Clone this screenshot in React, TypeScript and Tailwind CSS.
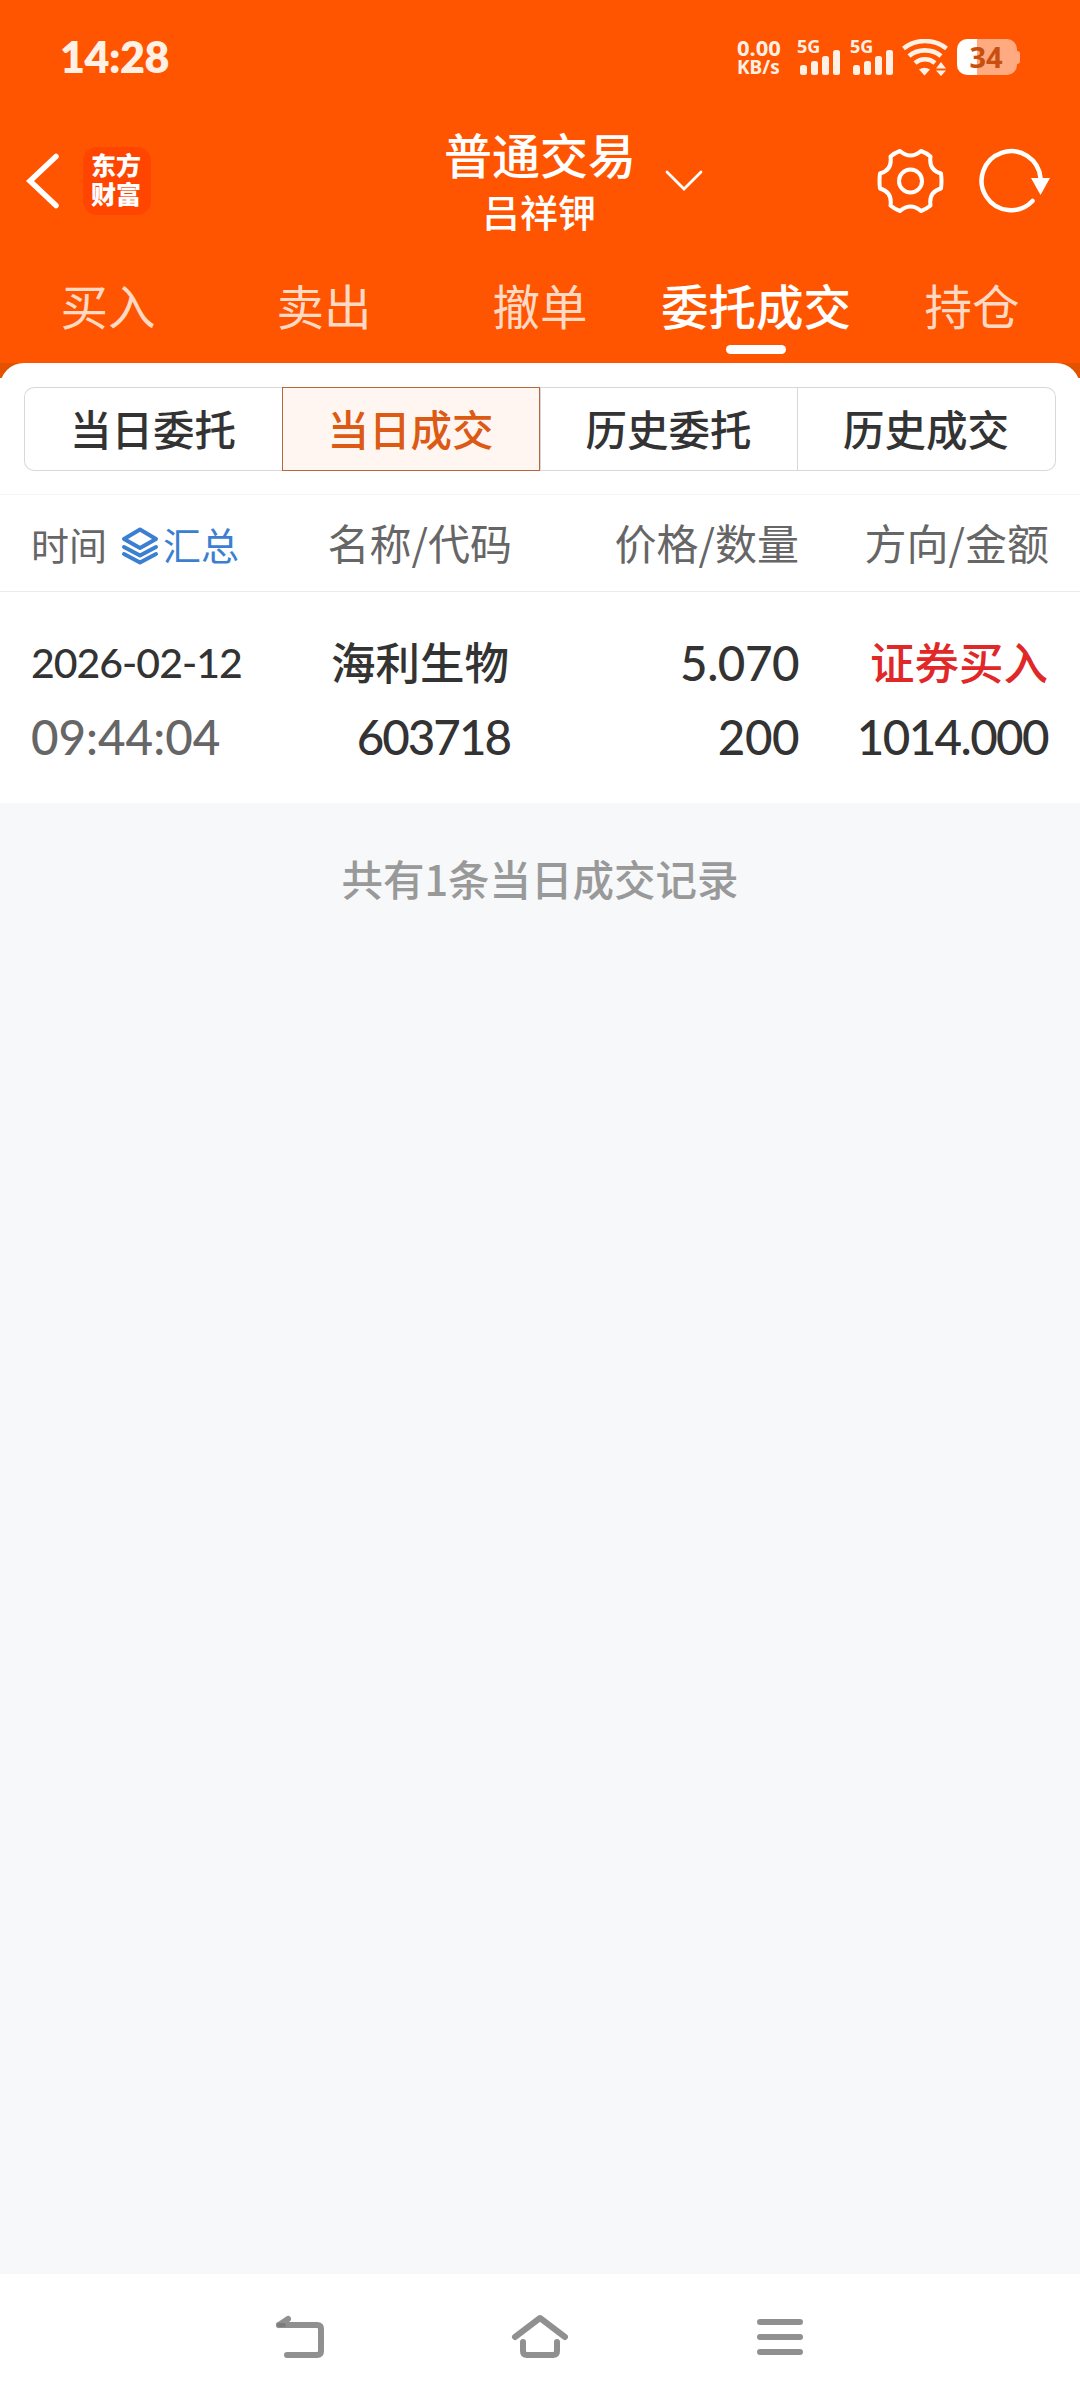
import React from 'react'

interface Tab {
    label: string
    active?: boolean
}

interface Deal {
    date: string
    time: string
    name: string
    code: string
    price: string
    amount: string
    direction: string
    total: string
}

const tabs: Tab[] = [{ label: '买入' }, { label: '卖出' }, { label: '撤单' }, { label: '委托成交', active: true }, { label: '持仓' }]

const segments: Tab[] = [{ label: '当日委托' }, { label: '当日成交', active: true }, { label: '历史委托' }, { label: '历史成交' }]

const deals: Deal[] = [{ date: '2026-02-12', time: '09:44:04', name: '海利生物', code: '603718', price: '5.070', amount: '200', direction: '证券买入', total: '1014.000' }]

const SignalBars = () => (
    <div className="flex w-[44px] flex-col">
        <span className="h-[11px] font-['Noto_Sans'] text-[18px] leading-[14px] font-bold">5G</span>
        <svg className="ml-[3px]" width="40" height="25" viewBox="0 0 40 25" fill="currentColor">
            <rect x="0" y="15" width="7" height="10" rx="2.5" />
            <rect x="11" y="11" width="7" height="14" rx="2.5" />
            <rect x="22" y="6" width="7" height="19" rx="2.5" />
            <rect x="33" y="0" width="7" height="25" rx="2.5" />
        </svg>
    </div>
)

const WifiIcon = () => (
    <svg width="46" height="37" viewBox="0 0 46 37" fill="none" stroke="currentColor" strokeWidth="4.6">
        <path d="M1.5 9.5C14 -.5 32 -.5 44.5 9.5" />
        <path d="M7 17C16 9.5 30 9.5 39 17" />
        <path d="M13 24C19 19 27 19 33 24" />
        <path d="M17 30.5Q22.5 27 28 30.5L22.5 36.5Z" fill="currentColor" stroke="none" />
        <path d="M34 29.5L39 23L44 29.5ZM34 31.5L39 37L44 31.5Z" fill="currentColor" stroke="none" />
    </svg>
)

const Battery = () => (
    <div className="flex items-center">
        <div className="flex h-9 w-[60px] items-center justify-center rounded-[10px] bg-linear-to-r from-white from-[34%] to-[#ffaa80] to-[34%] pr-[2px] font-['Noto_Sans'] text-[29px] font-bold text-[#c8500f]">34</div>
        <div className="h-[13px] w-[3px] rounded-r-sm bg-[#ffaa80]" />
    </div>
)

const StatusBar = () => (
    <div className="flex h-[114px] items-start justify-between pr-[60px] pl-[60px] text-[#fff0e6]">
        <div className="mt-[29px] font-['Lato'] text-[43px] leading-[56px] font-extrabold tracking-[-0.400px]">14:28</div>
        <div className="mt-[39px] flex items-start">
            <div className="-mt-[2px] w-[60px] font-['Noto_Sans'] font-bold">
                <div className="text-[22px] leading-[20px]">0.00</div>
                <div className="text-[19px] leading-[21px]">KB/s</div>
            </div>
            <div className="mr-[9px]">
                <SignalBars />
            </div>
            <SignalBars />
            <div className="mr-[9px] ml-[8px]">
                <WifiIcon />
            </div>
            <Battery />
        </div>
    </div>
)

const GearIcon = () => (
    <svg width="68" height="66" viewBox="-33.5 -33 68 66" fill="none" stroke="currentColor" strokeWidth="4" strokeLinejoin="round">
        <path d="M-10.500 -30Q0 -21 10.500 -30Q16 -28 20 -24.500Q18 -11 30.500 -7.500Q31.500 0 30.500 7.500Q18 11 20 24.500Q16 28 10.500 30Q0 21 -10.500 30Q-16 28 -20 24.500Q-18 11 -30.500 7.500Q-31.500 0 -30.500 -7.500Q-18 -11 -20 -24.500Q-16 -28 -10.500 -30Z" />
        <circle r="11.500" />
    </svg>
)

const RefreshIcon = () => (
    <svg width="72" height="66" viewBox="-33 -33 72 66" fill="none" stroke="currentColor" strokeWidth="4.500" strokeLinecap="round">
        <path d="M21.500 20A29.500 29.500 0 1 1 29.500 -3" />
        <path d="M20 -3H39L29.500 14Z" fill="currentColor" stroke="none" />
    </svg>
)

const TitleBar = () => (
    <div className="grid h-[135px] grid-cols-[1fr_auto_1fr] items-center text-white">
        <div className="-mt-[2px] flex items-center">
            <svg className="ml-[25px]" width="36" height="56" viewBox="0 0 36 56" fill="none" stroke="currentColor" strokeWidth="5.500" strokeLinecap="round">
                <path d="M31 3.500L5 28L31 52.500" />
            </svg>
            <div className="ml-[22px] flex h-[68px] w-[68px] flex-col items-center rounded-[14px] bg-[#ff4500] pr-[2px] text-[25px] leading-[29px] font-black">
                <span className="mt-[3px]">东方</span>
                <span>财富</span>
            </div>
        </div>
        <div className="-mt-[2px] text-center font-medium">
            <div className="text-[48px] leading-[60px]">普通交易</div>
            <div className="pr-[2px] text-[38px] leading-[56px]">吕祥钾</div>
        </div>
        <div className="-mt-[2px] flex items-center">
            <svg className="ml-[28px]" width="40" height="22" viewBox="0 0 40 22" fill="none" stroke="currentColor" strokeWidth="2.800" strokeLinecap="round">
                <path d="M3 2L20 19L37 2" />
            </svg>
            <div className="mr-[30px] ml-auto flex gap-[33px]">
                <GearIcon />
                <RefreshIcon />
            </div>
        </div>
    </div>
)

const TabBar = () => (
    <div className="grid h-[114px] grid-cols-5">
        {tabs.map((tab) => (
            <div key={tab.label} className={`flex flex-col items-center pt-[21px] ${tab.active ? 'font-medium text-white' : 'text-[#ffd9c4]'}`}>
                <span className="text-[47.500px] leading-[70px] whitespace-nowrap">{tab.label}</span>
                {tab.active && <span className="mt-[5px] h-[9px] w-[60px] rounded-full bg-white" />}
            </div>
        ))}
    </div>
)

const SegmentedControl = () => (
    <div className="mx-[24px] grid h-[84px] grid-cols-4">
        {segments.map((segment) => (
            <div
                key={segment.label}
                className={`flex items-center justify-center border pr-[1px] pb-[2px] text-[41.500px] font-medium first:rounded-l-[10px] first:border-r-0 last:rounded-r-[10px] last:border-l-0 ${
                    segment.active ? 'border-[#b5683c] bg-[#fff6f2] text-[#dc5a14]' : 'border-[#d8d8d8] text-[#333]'
                }`}
            >
                {segment.label}
            </div>
        ))}
    </div>
)

const LayersIcon = () => (
    <svg className="mt-[4px]" width="38" height="38" viewBox="0 0 38 38" fill="none" stroke="currentColor" strokeWidth="4" strokeLinecap="round" strokeLinejoin="round">
        <path d="M19 2.500L35 12L19 21L3 12Z" />
        <path d="M3 20L19 28.500L35 20" />
        <path d="M3 27L19 35.500L35 27" />
    </svg>
)

const columns = 'grid grid-cols-[280px_200px_288px_250px] pl-[31px]'

const TableHeader = () => (
    <div className={`${columns} h-[98px] items-center border-y border-t-[#f6f6f6] border-b-[#ebebeb] pb-[3px] text-right text-[42px] text-[#666]`}>
        <div className="flex items-center pt-[4px] text-[38px]">
            时间
            <span className="ml-[14px] flex items-center gap-[4px] text-[#3c7fd0]">
                <LayersIcon />
                汇总
            </span>
        </div>
        <div className="-mr-[1px]">名称/代码</div>
        <div>价格/数量</div>
        <div>方向/金额</div>
    </div>
)

const DealRow: React.FC<{ deal: Deal }> = ({ deal }) => (
    <div className={`${columns} h-[211px] grid-rows-[74px_74px] pt-[34px] text-right font-['Lato','Noto_Sans_CJK_SC',sans-serif] text-[47.500px] leading-[74px] font-medium tracking-[-0.500px] text-[#333]`}>
        <div className="text-left text-[41px] tracking-[-1px]">{deal.date}</div>
        <div className="pr-[2px] text-[44.500px] tracking-normal">{deal.name}</div>
        <div>{deal.price}</div>
        <div className="pr-[1px] text-[44.500px] tracking-normal text-[#e02828]">{deal.direction}</div>
        <div className="text-left text-[#666] tracking-normal">{deal.time}</div>
        <div className="pr-[1px] tracking-[-2px]">{deal.code}</div>
        <div>{deal.amount}</div>
        <div className="pr-[1px] tracking-[-1.600px]">{deal.total}</div>
    </div>
)

const NavBar = () => (
    <footer className="flex h-[126px] items-start bg-white pt-[40px] text-[#909090]">
        <svg className="ml-[274px]" width="52" height="46" viewBox="0 0 52 46" fill="none" stroke="currentColor" strokeWidth="6" strokeLinecap="round">
            <path d="M5 11H43Q47 11 47 15V37Q47 41 43 41H13" />
            <path d="M5 11L14 5" />
            <path d="M5 11H10" stroke="#7c7c7c" strokeWidth="4" />
        </svg>
        <svg className="ml-[184px]" width="60" height="46" viewBox="0 0 60 46" fill="none" stroke="currentColor" strokeWidth="6" strokeLinecap="round" strokeLinejoin="round">
            <path d="M5 23L30 4L55 23" />
            <path d="M13 28V37Q13 41 17 41H43Q47 41 47 37V28" />
        </svg>
        <svg className="ml-[185px]" width="50" height="46" viewBox="0 0 50 46" fill="none" stroke="currentColor" strokeWidth="6" strokeLinecap="round">
            <path d="M5 8H45M5 23H45M5 38H45" />
        </svg>
    </footer>
)

const App = () => (
    <div className="flex h-[2400px] w-[1080px] flex-col bg-[#f6f8fa] font-['Noto_Sans_CJK_SC',sans-serif]">
        <header className="bg-[#ff5500]">
            <StatusBar />
            <TitleBar />
            <TabBar />
        </header>
        <main className="flex-1">
            <div className="bg-[linear-gradient(#e25200_15px,#fff_15px)]">
                <div className="rounded-t-[24px] bg-white pt-[24px]">
                    <SegmentedControl />
                    <div className="h-[23px]" />
                    <TableHeader />
                    {deals.map((deal) => (
                        <DealRow key={deal.code} deal={deal} />
                    ))}
                </div>
            </div>
            <p className="pt-[44px] text-center text-[41.500px] leading-[62px] font-medium text-[#999]">共有{deals.length}条当日成交记录</p>
        </main>
        <NavBar />
    </div>
)

export default App
